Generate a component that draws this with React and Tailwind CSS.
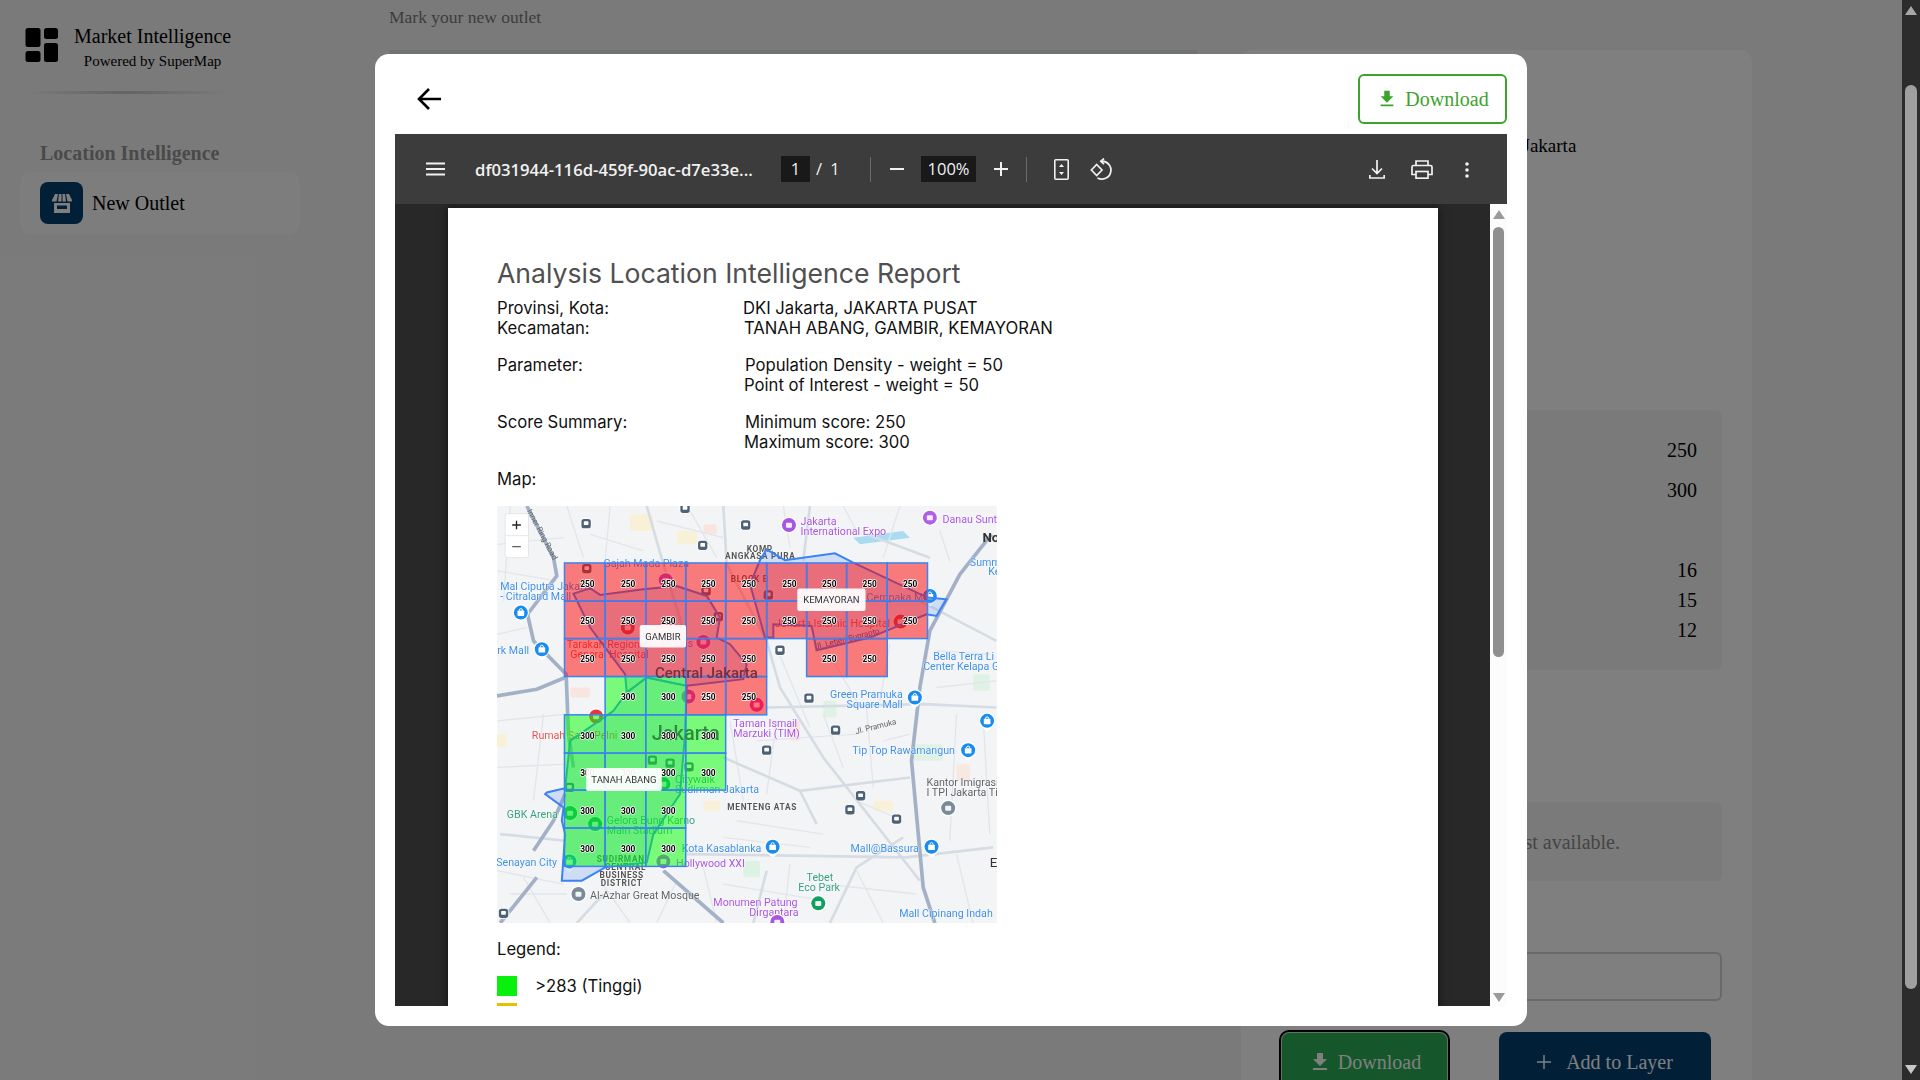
import React from "react";

const Z = 570;
const COLS = [223, 345, 467, 587, 707, 830, 950, 1070, 1192, 1313];
const ROWS = [186, 300, 413, 527, 642, 757, 868, 982, 1097];
const CELLS = [
  ...[0, 1, 2, 3, 4, 5, 6, 7, 8].map((c) => [c, 0, "r"]),
  ...[0, 1, 2, 3, 4, 5, 6, 7, 8].map((c) => [c, 1, "r"]),
  ...[0, 1, 2, 3, 4, 6, 7].map((c) => [c, 2, "r"]),
  [1, 3, "g"], [2, 3, "g"], [3, 3, "r"], [4, 3, "r"],
  ...[0, 1, 2, 3].map((c) => [c, 4, "g"]),
  ...[0, 1, 2, 3].map((c) => [c, 5, "g"]),
  ...[0, 1, 2].map((c) => [c, 6, "g"]),
  ...[0, 1, 2].map((c) => [c, 7, "g"]),
];

const BLUE = "#3f8fe8";
const PURPLE = "#a855e0";
const RED = "#e85050";
const GREEN = "#35a07a";
const GRAY = "#5f6368";

const LABELS = [
  [340, 198, "Gajah Mada Plaza", BLUE],
  [932, 72, "Jakarta", PURPLE],
  [932, 103, "International Expo", PURPLE],
  [1358, 66, "Danau Sunt", PURPLE],
  [30, 267, "Mal Ciputra Jakarta", BLUE],
  [30, 297, "- Citraland Mall", BLUE],
  [21, 460, "rk Mall", BLUE],
  [1440, 195, "Summ", BLUE],
  [1495, 222, "Ke", BLUE],
  [1130, 300, "Cempaka Mas", BLUE],
  [230, 442, "Tarakan Regional", RED],
  [240, 472, "General Hospital", RED],
  [512, 437, "Monas", PURPLE],
  [855, 378, "Jakarta Islamic Hospital", RED],
  [1330, 478, "Bella Terra Li", BLUE],
  [1300, 508, "Center Kelapa G", BLUE],
  [1020, 592, "Green Pramuka", BLUE],
  [1070, 622, "Square Mall", BLUE],
  [730, 110 + Z, "Taman Ismail", PURPLE],
  [730, 140 + Z, "Marzuki (TIM)", PURPLE],
  [1087, 190 + Z, "Tip Top Rawamangun", BLUE],
  [125, 145 + Z, "Rumah Sakit Pelni", RED],
  [1310, 287 + Z, "Kantor Imigrasi", GRAY],
  [1310, 317 + Z, "I TPI Jakarta Ti", GRAY],
  [555, 277 + Z, "Citywalk", GREEN],
  [555, 307 + Z, "Sudirman Jakarta", BLUE],
  [50, 382 + Z, "GBK Arena", GREEN],
  [350, 400 + Z, "Gelora Bung Karno", GREEN],
  [350, 430 + Z, "Main Stadium", GREEN],
  [575, 484 + Z, "Kota Kasablanka", BLUE],
  [1082, 484 + Z, "Mall@Bassura", BLUE],
  [18, 525 + Z, "Senayan City", BLUE],
  [558, 530 + Z, "Hollywood XXI", PURPLE],
  [300, 625 + Z, "Al-Azhar Great Mosque", GRAY],
  [950, 570 + Z, "Tebet", GREEN],
  [925, 600 + Z, "Eco Park", GREEN],
  [670, 645 + Z, "Monumen Patung", PURPLE],
  [778, 675 + Z, "Dirgantara", PURPLE],
  [1228, 678 + Z, "Mall Cipinang Indah", BLUE],
];

const BOLD_LABELS = [
  [770, 152, "KOMP."],
  [705, 175, "ANGKASA PURA"],
  [722, 242, "BLOCK B"],
  [712, 358 + Z, "MENTENG ATAS"],
  [320, 515 + Z, "SUDIRMAN"],
  [345, 538 + Z, "CENTRAL"],
  [328, 562 + Z, "BUSINESS"],
  [332, 585 + Z, "DISTRICT"],
];

const TRANSIT = [
  [288, 68], [767, 72], [638, 133], [585, 22], [870, 448], [957, 592],
  [1037, 118 + Z], [830, 178 + Z], [1112, 315 + Z], [1080, 357 + Z],
  [1220, 385 + Z], [40, 668 + Z], [290, 203], [648, 270], [835, 282], [685, 347],
  [487, 208 + Z], [540, 217 + Z], [597, 228 + Z], [238, 290 + Z],
];
const SHOP = [
  [92, 335], [155, 445], [1320, 285], [1275, 590], [1492, 90 + Z], [848, 468 + Z],
  [1325, 468 + Z], [1435, 178 + Z], [238, 512 + Z],
];
const ROADS_MAJOR = [
  "M110 15 L190 170 L200 225 L112 340 L130 420 L228 520 L235 700 L250 800",
  "M1505 100 L1410 220 L1320 390 L1290 560 L1265 780 L1300 1160 L1335 1267",
  "M520 1110 L700 1267",
  "M20 585 L140 565 L225 530",
  "M130 1050 L190 960 L225 880",
  "M140 1130 L60 1230 L30 1267",
];
const ROADS_MINOR = [
  "M470 15 L520 190 L590 420",
  "M700 15 L710 190 L830 420 L870 560 L1000 770 L1290 1140",
  "M960 15 L940 180",
  "M1130 100 L1320 170",
  "M700 770 L930 870 L1260 830",
  "M590 1060 L1250 1070 L1510 1040",
  "M830 620 L1300 610 L1520 620",
  "M30 1000 L225 1020",
  "M830 1110 L790 1267",
  "M1020 1267 L1100 1100 L1240 1010",
  "M930 870 L980 970",
  "M1290 300 L1520 420",
  "M340 1180 L260 1267",
];
const STREETS = [
  "M21 130 L220 110", "M21 400 L110 380", "M21 660 L230 640", "M21 800 L230 790", "M21 1110 L220 1150",
  "M60 15 L40 300", "M160 640 L130 900", "M100 1130 L180 1267", "M330 1140 L420 1267", "M560 1140 L500 1267",
  "M640 1100 L680 1267", "M900 1090 L880 1267", "M1100 1110 L1180 1267", "M1400 1060 L1450 1267",
  "M720 660 L760 900", "M860 660 L830 880", "M1000 640 L1060 800", "M1130 620 L1150 860", "M1400 640 L1380 1020",
  "M1480 650 L1500 1000", "M1100 900 L1240 960", "M740 960 L1000 1000", "M700 1010 L960 1040", "M1000 1150 L1280 1180",
  "M880 15 L900 140", "M1060 15 L1100 90", "M1230 15 L1180 170", "M1350 90 L1380 180", "M21 210 L200 240",
  "M860 440 L960 680", "M1000 430 L1100 600", "M1200 430 L1170 600", "M1340 450 L1500 460", "M1340 560 L1520 540",
  "M600 30 L680 170", "M300 100 L460 150", "M500 60 L700 110", "M230 15 L280 170", "M360 15 L345 180",
  "M700 1150 L1000 1200", "M60 1180 L230 1180", "M1180 720 L1260 700", "M800 720 L1100 700",
];
const PARKS = [
  [760, 1080, 50, 50, "#dcf2e3"],
  [1270, 730, 90, 50, "#dff2e5"],
  [1450, 520, 50, 50, "#dff2e5"],
  [1000, 600, 40, 50, "#dff2e5"],
  [1400, 790, 40, 50, "#f9e8e1"],
  [420, 40, 70, 50, "#f8f1d8"],
  [560, 90, 60, 40, "#f8f1d8"],
  [640, 70, 40, 30, "#f9e5e0"],
  [900, 660, 30, 60, "#f9e5e0"],
  [20, 700, 30, 40, "#f8f1d8"],
  [1150, 900, 60, 30, "#f8f1d8"],
  [640, 900, 50, 30, "#f8f1d8"],
  [240, 560, 60, 30, "#f9e5e0"],
];

function MapLabel({ x, y, w, h, children }) {
  return (
    <g>
      <rect x={x} y={y} width={w} height={h} rx="6" fill="#ffffff" fillOpacity="0.93" />
      <text x={x + w / 2} y={y + h / 2 + 10} textAnchor="middle" fontSize="28.500" fill="#333" fontFamily="Roboto, sans-serif">
        {children}
      </text>
    </g>
  );
}

function ReportMap() {
  return (
    <svg viewBox="21 15 1500 1252" className="block w-[500px] h-[417px] blur-[0.4px]">
      <rect x="21" y="15" width="1500" height="1252" fill="#f3f4f5" />
      {PARKS.map(([x, y, w, h, c], i) => (
        <rect key={i} x={x} y={y} width={w} height={h} rx="8" fill={c} />
      ))}
      <path d="M1090 110 L1240 90 L1260 110 L1110 130 Z" fill="#a9dcf2" />
      {STREETS.map((d, i) => (
        <path key={i} d={d} fill="none" stroke="#e2e6eb" strokeWidth="4" />
      ))}
      {ROADS_MINOR.map((d, i) => (
        <path key={i} d={d} fill="none" stroke="#d5dce4" strokeWidth="8" />
      ))}
      {ROADS_MAJOR.map((d, i) => (
        <path key={i} d={d} fill="none" stroke="#a3b1c6" strokeWidth="11" strokeLinejoin="round" />
      ))}
      <text x="110" y="30" fontSize="24" fill={GRAY} fontFamily="Roboto, sans-serif" transform="rotate(62 110 30)">
        Inner Ring Road
      </text>
      <text x="1098" y={130 + Z} fontSize="24" fill={GRAY} fontFamily="Roboto, sans-serif" transform={`rotate(-14 1098 ${130 + Z})`}>
        Jl. Pramuka
      </text>
      {LABELS.map(([x, y, t, c]) => (
        <text key={t + y} x={x} y={y} fontSize="32" fill={c} fontFamily="Roboto, sans-serif" stroke="#ffffff" strokeWidth="2" paintOrder="stroke">
          {t}
        </text>
      ))}
      {BOLD_LABELS.map(([x, y, t]) => (
        <text key={t} x={x} y={y} fontSize="25" fontWeight="700" letterSpacing="2" fill="#555" fontFamily="Roboto, sans-serif" stroke="#ffffff" strokeWidth="2" paintOrder="stroke">
          {t}
        </text>
      ))}
      <text x="1478" y="124" fontSize="40" fontWeight="700" fill="#333" fontFamily="Roboto, sans-serif">No</text>
      <text x="1500" y={528 + Z} fontSize="40" fill="#333" fontFamily="Roboto, sans-serif">E</text>
      <text x="980" y="445" fontSize="24" fill="#4a4a6a" fontFamily="Roboto, sans-serif" transform="rotate(-14 980 455)">
        Jl. Letjen Suprapto
      </text>

      {TRANSIT.map(([x, y], i) => (
        <g key={i}>
          <circle cx={x} cy={y} r="18" fill="#ffffff" fillOpacity="0.8" />
          <rect x={x - 14} y={y - 14} width="28" height="28" rx="8" fill="#4d6177" />
          <rect x={x - 7} y={y - 7} width="14" height="11" rx="2" fill="#ffffff" />
        </g>
      ))}
      {SHOP.map(([x, y], i) => (
        <g key={i}>
          <path d={`M${x - 25} ${y} A25 25 0 1 1 ${x + 25} ${y} Q${x + 20} ${y + 20} ${x} ${y + 32} Q${x - 20} ${y + 20} ${x - 25} ${y}Z`} fill="#ffffff" />
          <circle cx={x} cy={y} r="21" fill="#1a8cf0" />
          <rect x={x - 10} y={y - 6} width="20" height="16" rx="2" fill="#ffffff" />
          <path d={`M${x - 5} ${y - 6} a5 6 0 0 1 10 0`} fill="none" stroke="#ffffff" strokeWidth="3" />
        </g>
      ))}
      {[[897, 72, "#a855e0"], [1320, 50, "#b060e8"], [862, 697 + Z - 3, "#a855e0"], [520, 512 + Z, "#a855e0"], [527, 238, "#a855e0"], [640, 423, "#d63cae"], [800, 42 + Z, "#d63cae"], [595, 17 + Z, "#a855e0"], [413, 380, "#e8363a"], [1232, 362, "#e8363a"], [318, 77 + Z, "#e8363a"], [240, 367 + Z, "#10a060"], [315, 400 + Z, "#10a060"], [520, 280 + Z, "#10a060"], [985, 638 + Z, "#10a060"], [1375, 352 + Z, "#7a8a99"], [265, 610 + Z, "#7a8a99"]].map(([x, y, c], i) => (
        <g key={i}>
          <circle cx={x} cy={y} r="25" fill="#ffffff" />
          <circle cx={x} cy={y} r="21" fill={c} />
          <rect x={x - 9} y={y - 7} width="18" height="15" rx="3" fill="#ffffff" fillOpacity="0.9" />
        </g>
      ))}

      <path d="M830 145 L885 178 L1035 157 L1090 185 L1313 290 L1370 295 L1340 345 L1310 340 L1140 410 L980 448 L965 375 L850 370 L850 410 L825 410 L780 250 L810 178 Z" fill="#3b82f6" fillOpacity="0.2" stroke="#3b82f6" strokeWidth="6" />
      <path d="M250 278 L300 262 L330 282 L460 265 L560 255 L650 285 L690 350 L680 410 L720 430 L770 490 L760 535 L590 555 L470 530 L410 575 L405 520 L300 380 Z" fill="#3b82f6" fillOpacity="0.2" stroke="#3b82f6" strokeWidth="6" />
      <path d="M370 630 L240 720 L225 862 L170 875 L165 880 L220 920 L215 960 L225 1000 L215 1140 L275 1140 L345 1100 L470 1085 L490 1000 L570 880 L585 700 L590 555 L470 530 L410 575 Z" fill="#3b82f6" fillOpacity="0.2" stroke="#3b82f6" strokeWidth="6" />
      {CELLS.map(([c, r, k]) => (
        <rect
          key={`${c}-${r}`}
          x={COLS[c]}
          y={ROWS[r]}
          width={COLS[c + 1] - COLS[c]}
          height={ROWS[r + 1] - ROWS[r]}
          fill={k === "r" ? "#ff0000" : "#00ff00"}
          fillOpacity="0.5"
          stroke="#3b82f6"
          strokeWidth="4.500"
        />
      ))}
      <text x="495" y="532" fontSize="45" fontWeight="500" fill="#7a2f3a" fontFamily="Roboto, sans-serif">Central Jakarta</text>
      <text x="485" y={148 + Z} fontSize="60" fontWeight="500" fill="#2e8b3c" fontFamily="Roboto, sans-serif">Jakarta</text>
      {CELLS.map(([c, r, k]) => (
        <text
          key={`t${c}-${r}`}
          x={(COLS[c] + COLS[c + 1]) / 2 + 8}
          y={(ROWS[r] + ROWS[r + 1]) / 2 + 14}
          textAnchor="middle"
          fontSize="25"
          fontWeight="700"
          fill="#000"
          stroke="#ffffff"
          strokeWidth="4"
          paintOrder="stroke"
          fontFamily="Roboto, sans-serif"
        >
          {k === "r" ? "250" : "300"}
        </text>
      ))}
      <MapLabel x={922} y={263} w={205} h={67}>KEMAYORAN</MapLabel>
      <MapLabel x={449} y={372} w={139} h={68}>GAMBIR</MapLabel>
      <MapLabel x={288} y={802} w={227} h={69}>TANAH ABANG</MapLabel>
      <rect x="45" y="38" width="70" height="132" rx="6" fill="#ffffff" stroke="#dddddd" strokeWidth="2" />
      <path d="M45 104 H115" stroke="#dddddd" strokeWidth="2" />
      <path d="M66 72 H92 M79 59 V85" stroke="#222222" strokeWidth="4" />
      <path d="M66 137 H92" stroke="#666666" strokeWidth="4" />
    </svg>
  );
}

function DownloadGlyph({ className }) {
  return (
    <svg viewBox="0 0 24 24" className={className} fill="currentColor">
      <path d="M5 20h14v-2H5zM19 9h-4V3H9v6H5l7 7z" />
    </svg>
  );
}

function Toolbar() {
  return (
    <div className="flex items-center h-[70px] shrink-0 bg-[#3c3c3c] text-[#f1f1f1] font-['Open_Sans',sans-serif] text-[16.500px]">
      <svg viewBox="0 0 19 14" className="ml-[31px] w-[19px] h-[14px]" fill="none" stroke="currentColor" strokeWidth="2">
        <path d="M0 1.500h19M0 7h19M0 12.500h19" />
      </svg>
      <div className="ml-[30px] w-[278px] mt-[1px] font-semibold text-[16.700px] whitespace-nowrap overflow-hidden">df031944-116d-459f-90ac-d7e33e...</div>
      <div className="ml-[28px] w-[29px] h-[26px] bg-[#191919] flex items-center justify-center">1</div>
      <div className="ml-[4px] w-[10px] text-center">/</div>
      <div className="ml-[6px] w-[10px] text-center">1</div>
      <div className="ml-[30px] w-px h-[25px] bg-[#6b6b6b]" />
      <svg viewBox="0 0 14 14" className="ml-[19px] w-[14px] h-[14px]" fill="none" stroke="currentColor" strokeWidth="2">
        <path d="M0 7h14" />
      </svg>
      <div className="ml-[17px] w-[55px] h-[26px] bg-[#191919] flex items-center justify-center">100%</div>
      <svg viewBox="0 0 14 14" className="ml-[18px] w-[14px] h-[14px]" fill="none" stroke="currentColor" strokeWidth="2">
        <path d="M0 7h14M7 0v14" />
      </svg>
      <div className="ml-[18px] w-px h-[25px] bg-[#6b6b6b]" />
      <svg viewBox="0 0 15 21" className="ml-[27px] mt-[1px] w-[15px] h-[21px]" fill="none" stroke="currentColor" strokeWidth="1.600">
        <rect x="0.800" y="0.800" width="13.400" height="19.400" rx="1" />
        <path d="M7.500 5l2.500 3H5zM7.500 16l2.500-3H5z" fill="currentColor" stroke="none" />
      </svg>
      <svg viewBox="0 0 24 24" className="ml-[21px] mt-[1px] w-[24px] h-[24px]" fill="none" stroke="currentColor" strokeWidth="1.700">
        <path d="M6.700 6.500L12 12l-5.300 5.500L1.400 12z" />
        <path d="M11 3.200A9 9 0 1 1 7.500 20" />
        <path d="M14 0.500L10.800 3.200 14 6.200" />
      </svg>
      <svg viewBox="0 0 16 19" className="ml-[255px] mt-[1px] w-[16px] h-[19px]" fill="none" stroke="currentColor" strokeWidth="1.700">
        <path d="M8 0v13M3 8.500L8 13.500l5-5M0.800 15v3h14.400v-3" />
      </svg>
      <svg viewBox="0 0 22 19" className="ml-[26px] mt-[1px] w-[22px] h-[19px]" fill="none" stroke="currentColor" strokeWidth="1.700">
        <path d="M5 5.500V1h12v4.500M5 14.500H1V7a1.500 1.500 0 0 1 1.500-1.500h17A1.500 1.500 0 0 1 21 7v7.500h-4" />
        <rect x="5" y="11.500" width="12" height="6.700" />
      </svg>
      <svg viewBox="0 0 4 16" className="ml-[32px] mt-[1px] w-[4px] h-[16px]" fill="currentColor">
        <circle cx="2" cy="2" r="1.800" />
        <circle cx="2" cy="8" r="1.800" />
        <circle cx="2" cy="14" r="1.800" />
      </svg>
    </div>
  );
}

function InfoRow({ label, lines, offsets }) {
  return (
    <div className="flex">
      <div className="w-[246px] shrink-0">{label}</div>
      <div>
        {lines.map((l, i) => (
          <div key={l} style={{ marginLeft: offsets[i] }}>{l}</div>
        ))}
      </div>
    </div>
  );
}

function PdfViewer() {
  return (
    <div className="flex flex-col h-[872px] mx-[20px] overflow-hidden">
      <Toolbar />
      <div className="flex flex-1 min-h-0 bg-[#282828]">
        <div className="flex-1 min-w-0 pl-[53px] pr-[52px] pt-[4px] overflow-hidden">
          <div className="h-[1300px] bg-white shadow-[0_0_8px_rgba(0,0,0,0.6)] pl-[49px] pt-[48px] font-['Inter',sans-serif] text-[#111111] text-[16.650px] leading-[20px]">
            <h1 className="text-[#505050] text-[26.600px] leading-[34px] font-normal">Analysis Location Intelligence Report</h1>
            <div className="mt-[8px]">
              <div className="flex">
                <div className="w-[246px] shrink-0">Provinsi, Kota:</div>
                <div>DKI Jakarta, JAKARTA PUSAT</div>
              </div>
              <div className="flex">
                <div className="w-[247px] shrink-0">Kecamatan:</div>
                <div>TANAH ABANG, GAMBIR, KEMAYORAN</div>
              </div>
            </div>
            <div className="mt-[17px]">
              <InfoRow label="Parameter:" lines={["Population Density - weight = 50", "Point of Interest - weight = 50"]} offsets={[2, 1]} />
            </div>
            <div className="mt-[17px]">
              <InfoRow label="Score Summary:" lines={["Minimum score: 250", "Maximum score: 300"]} offsets={[2, 1]} />
            </div>
            <div className="mt-[17px]">Map:</div>
            <div className="mt-[17px]"><ReportMap /></div>
            <div className="mt-[16px]">Legend:</div>
            <div className="flex items-center mt-[17px]">
              <div className="w-[20px] h-[20px] bg-[#08f00c]" />
              <div className="ml-[18px]">&gt;283 (Tinggi)</div>
            </div>
            <div className="w-[20px] h-[20px] bg-[#e9c000] mt-[7px]" />
          </div>
        </div>
        <div className="w-[17px] shrink-0 bg-[#fcfcfc] relative flex flex-col items-center">
          <div className="mt-[6px] w-0 h-0 border-x-[6px] border-x-transparent border-b-[9px] border-b-[#9a9a9a]" />
          <div className="mt-[8px] w-[11px] h-[430px] rounded-full bg-[#8f8f8f]" />
          <div className="mt-auto mb-[4px] w-0 h-0 border-x-[6px] border-x-transparent border-t-[9px] border-t-[#9a9a9a]" />
        </div>
      </div>
    </div>
  );
}

function Background() {
  return (
    <div className="flex h-[1080px] overflow-hidden bg-[#f5f5f5] font-['Liberation_Serif',serif] text-black">
      <aside className="w-[389px] shrink-0 pt-[28px]">
        <div className="flex pl-[25px]">
          <svg viewBox="0 0 34 34" className="w-[34px] h-[34px]" fill="#000000">
            <rect x="0.500" y="0" width="15" height="19" rx="2.500" />
            <rect x="19" y="0" width="14" height="11" rx="2.500" />
            <rect x="0.500" y="23" width="15" height="11" rx="2.500" />
            <rect x="19" y="15" width="14" height="19" rx="2.500" />
          </svg>
          <div className="ml-[15px] -mt-[5px] flex flex-col items-center">
            <div className="text-[20px] leading-[26px]">Market Intelligence</div>
            <div className="text-[15px] leading-[20px] mt-[2px]">Powered by SuperMap</div>
          </div>
        </div>
        <div className="ml-[24px] mt-[20px] w-[204px] h-[3px] bg-linear-to-r from-transparent via-[#c8c8c8] to-transparent" />
        <div className="ml-[40px] mt-[47px] text-[20px] leading-[24px] font-bold text-[#959595]">Location Intelligence</div>
        <div className="ml-[20px] mt-[7px] w-[280px] h-[62px] rounded-[10px] bg-white/60 flex items-center pl-[20px]">
          <div className="w-[43px] h-[42px] rounded-[8px] bg-[#024070] flex items-center justify-center">
            <svg viewBox="0 0 20 19" className="w-[20px] h-[19px]" fill="#ffffff">
              <path d="M3 0h3l-1.500 7.500H0.200L0 6zM7 0h2.500v7.500H6zM10.500 0H13l1 7.500h-3.500zM14 0h3l3 6-.2 1.500H15.500z" />
              <path d="M2 9h16v10H2zM5 11.500v3.500h10v-3.500z" fillRule="evenodd" />
            </svg>
          </div>
          <div className="ml-[9px] text-[20px]">New Outlet</div>
        </div>
      </aside>
      <main className="flex-1 min-w-0 flex flex-col">
        <div className="pt-[7px] h-[50px] text-[17.500px] leading-[20px] text-[#7a7a7a]">Mark your new outlet</div>
        <div className="flex flex-1 min-h-0">
          <div className="w-[808px] h-[600px] bg-[#dfe8e3]" />
          <div className="ml-[44px] w-[511px] h-[1100px] rounded-t-[12px] bg-white pl-[40px] pr-[30px]">
            <div className="pt-[84px] pl-[203px] text-[19px] leading-[24px]">DKI Jakarta</div>
            <div className="mt-[252px] h-[260px] rounded-[6px] bg-[#f5f5f5] pt-[24px] pr-[25px] text-[20px] text-right">
              <div className="h-[40px] leading-[32px]">250</div>
              <div className="h-[40px] leading-[32px]">300</div>
              <div className="h-[40px]" />
              <div className="h-[30px] leading-[32px]">16</div>
              <div className="h-[30px] leading-[32px]">15</div>
              <div className="h-[30px] leading-[32px]">12</div>
            </div>
            <div className="mt-[132px] h-[79px] rounded-[6px] bg-[#f5f5f5] flex items-center justify-end pr-[102px] text-[20px] text-[#8a8a8a]">Latest available.</div>
            <div className="mt-[71px] h-[49px] rounded-[6px] border-2 border-[#d2d2d2]" />
            <div className="mt-[31px] flex text-[20px] text-white">
              <div className="w-[167px] h-[60px] rounded-[8px] bg-[#2aac54] border border-white/70 outline-2 outline-black flex items-center justify-center">
                <DownloadGlyph className="w-[24px] h-[24px]" />
                <span className="ml-[6px]">Download</span>
              </div>
              <div className="ml-[51px] w-[212px] h-[60px] rounded-[8px] bg-[#024070] flex items-center justify-center">
                <svg viewBox="0 0 14 14" className="w-[14px] h-[14px]" fill="none" stroke="currentColor" strokeWidth="1.500">
                  <path d="M0 7h14M7 0v14" />
                </svg>
                <span className="ml-[15px]">Add to Layer</span>
              </div>
            </div>
          </div>
        </div>
      </main>
    </div>
  );
}

export default function App() {
  return (
    <div className="flex h-[1080px] w-full overflow-hidden">
      <div className="relative flex-1 min-w-0 overflow-hidden">
        <Background />
        <div className="absolute inset-0 bg-black/50 flex items-center justify-center">
          <div className="w-[1152px] h-[972px] rounded-[14px] bg-white">
            <div className="h-[80px] pt-[10px] flex items-center justify-between pl-[42px] pr-[20px]">
              <svg viewBox="0 0 24 22" className="w-[24px] h-[22px]" fill="none" stroke="#000000" strokeWidth="2.600">
                <path d="M24 11H2M12 1L2 11l10 10" />
              </svg>
              <div className="w-[149px] h-[50px] -mt-[1px] rounded-[6px] border-2 border-[#3da32d] flex items-center justify-center text-[#3da32d] font-['Liberation_Serif',serif] text-[20px]">
                <DownloadGlyph className="w-[22px] h-[22px]" />
                <span className="ml-[7px]">Download</span>
              </div>
            </div>
            <PdfViewer />
          </div>
        </div>
      </div>
      <div className="w-[18px] shrink-0 bg-[#2c2c2c] flex flex-col items-center">
        <div className="mt-[6px] w-0 h-0 border-x-[6px] border-x-transparent border-b-[9px] border-b-[#a8a8a8]" />
        <div className="mt-[70px] w-[12px] h-[904px] rounded-full bg-[#9f9f9f]" />
        <div className="mt-auto mb-[6px] w-0 h-0 border-x-[6px] border-x-transparent border-t-[9px] border-t-[#c8c8c8]" />
      </div>
    </div>
  );
}
